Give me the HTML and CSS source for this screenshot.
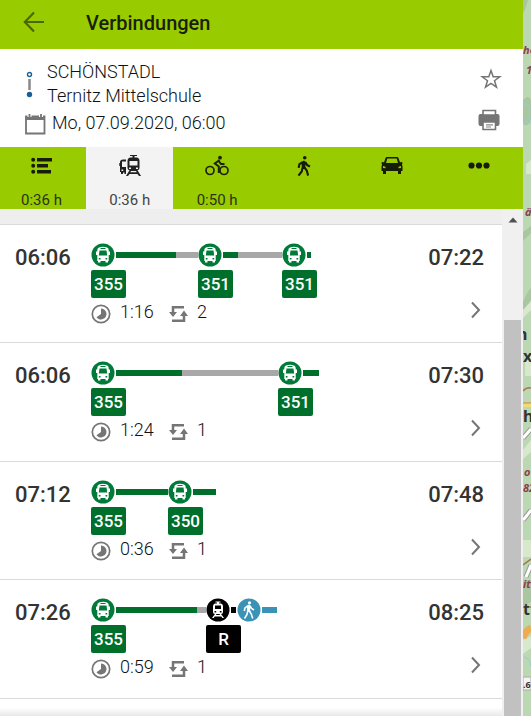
FILE: index.html
```html
<!DOCTYPE html>
<html lang="de">
<head>
<meta charset="utf-8">
<meta name="viewport" content="width=device-width, initial-scale=1">
<title>Verbindungen</title>
<link rel="stylesheet" href="styles.css">
</head>
<body>
<svg class="sprite" aria-hidden="true">
  <symbol id="bus" viewBox="0 0 24 24">
    <circle cx="12" cy="12" r="11.5" fill="#007a38"/>
    <path fill="#fff" d="M8 4.500Q12 3 16 4.500Q17.700 5 17.700 7V8.500H19V12H17.700V18H17V19.500H14.500V18H9.500V19.500H7V18H6.300V12H5V8.500H6.300V7Q6.300 5 8 4.500Z"/>
    <path fill="#007a38" d="M9.500 5h5v1h-5zM8.500 7.500h7l.7 5H7.800zM7.800 15h1.700v1.500H7.800zM14.500 15h1.700v1.500h-1.700z"/>
  </symbol>
  <symbol id="train" viewBox="0 0 24 24">
    <circle cx="12" cy="12" r="11.500" fill="#000"/>
    <path fill="#fff" d="M9.500 3.500h5v1H13V5.500h2Q17 6 17 8v6q0 2-2 2H9q-2 0-2-2V8q0-2 2-2.500h2V4.500H9.500zM9 16h1.500l-.7 1h4.400l-.7-1H15l3 4h-1.700l-1-1.500H8.700l-1 1.500H6z"/>
    <path fill="#000" d="M9 7.500h6V11H9zM8.500 13h1.700v1.500H8.500zM13.800 13h1.700v1.500h-1.700z"/>
  </symbol>
  <symbol id="walkman" viewBox="0 0 24 24">
    <circle cx="12.800" cy="3" r="2" fill="currentColor"/>
    <path fill="none" stroke="currentColor" stroke-width="2.300" d="M10 8 7 10l-.8 4M13.500 8l2 3 3 1.500M10.500 13.500 9.500 18l-3.500 4.500M12 13l3 4 1.500 5.500"/>
    <path fill="currentColor" d="M9 7.500 12 6l2.500 2-1.200 4.500 1 2.500-4.500-.5z"/>
  </symbol>
  <symbol id="walk" viewBox="0 0 24 24">
    <circle cx="12" cy="12" r="11.500" fill="#3a93b7"/>
    <circle cx="12.500" cy="4.800" r="1.600" fill="#fff"/>
    <path fill="none" stroke="#fff" stroke-width="1.600" d="M10.500 8 8 10l-.7 3M13 8l1.500 2.500L17 12M10.800 12.500 10 16.500l-2.500 4M12 12.500l2.300 3.500 1.400 4.500"/>
    <path fill="#fff" d="M9.800 7.500 12 6.500l2 1.500-1 4 .8 2-3.600-.5z"/>
  </symbol>
  <symbol id="clock" viewBox="0 0 20 20">
    <circle cx="10" cy="10" r="8.700" fill="none" stroke="#757575" stroke-width="1.700"/>
    <path fill="#757575" d="M10 4.500A5.500 5.500 0 1 1 5.500 13.200L10 10z"/>
  </symbol>
  <symbol id="change" viewBox="0 0 20 18">
    <path fill="none" stroke="#757575" stroke-width="2.500" d="M16 2.300H5V8M4 15.800h12V10"/>
    <path fill="#757575" d="M1 7h8l-4 5zM12 11h8l-4-5.500z"/>
  </symbol>
  <symbol id="chevron" viewBox="0 0 10 18">
    <path fill="none" stroke="#757575" stroke-width="2" d="m1 1.500 7 7.500-7 7.500"/>
  </symbol>
</svg>

<main class="app">
  <section class="panel">
    <header class="topbar">
      <button class="icon-button" aria-label="Zurück">
        <svg width="22" height="22" viewBox="0 0 22 22" fill="none" stroke="#4c6600" stroke-width="2.200"><path d="M21 11H2M11 1.500 1.800 11l9.200 9.500"/></svg>
      </button>
      <h1>Verbindungen</h1>
    </header>

    <section class="query">
      <div class="query-text">
        <div class="route">
          <svg width="11" height="28" viewBox="0 0 11 28"><circle cx="5.500" cy="3.500" r="2" fill="#fff" stroke="#1b6197" stroke-width="1.400"/><path stroke="#888" stroke-width="2.500" d="M5.500 8v11"/><circle cx="5.500" cy="23.500" r="2.700" fill="#1b5e96"/></svg>
          <div><div>SCHÖNSTADL</div><div>Ternitz Mittelschule</div></div>
        </div>
        <div class="date">
          <svg width="22" height="22" viewBox="0 0 22 22"><path fill="none" stroke="#757575" stroke-width="1.800" d="M2 3.500h18.500v17H2z"/><path fill="#757575" d="M1.500 3h19v4h-19z"/><path stroke="#fff" stroke-width="4" d="M5.500 0v4M17 0v4"/><path stroke="#757575" stroke-width="1.800" d="M5.500 1v4M17 1v4"/></svg>
          <span>Mo, 07.09.2020, 06:00</span>
        </div>
      </div>
      <div class="query-actions">
        <button class="icon-button" aria-label="Merken"><svg width="22" height="22" viewBox="0 0 22 22"><path fill="none" stroke="#757575" stroke-width="1.500" d="m11 2.500 2.200 6.200 6.600.1-5.300 3.900 2 6.500L11 15.300l-5.500 3.900 2-6.500-5.300-3.900 6.600-.1z"/></svg></button>
        <button class="icon-button" aria-label="Drucken"><svg width="22" height="22" viewBox="0 0 22 22"><rect x="0.500" y="5" width="21" height="12" rx="2" fill="#757575"/><path fill="#fff" stroke="#757575" stroke-width="1.600" d="M5 1.500h12.500V6H5zM5 13h12.500v7.500H5z"/><path stroke="#888" stroke-width="1.200" d="M8 15.800h7M8 18h5"/></svg></button>
      </div>
    </section>

    <nav class="modes">
      <button aria-label="Alle"><svg width="22" height="22" viewBox="0 0 22 22" fill="#171c08"><path d="M6 3h15v3.500H6zM6 9h11v3.500H6zM6 15h14v3.500H6z"/><circle cx="2.200" cy="4.800" r="2"/><circle cx="2.200" cy="10.800" r="2"/><circle cx="2.200" cy="16.800" r="2"/></svg><span>0:36 h</span></button>
      <button class="active" aria-label="Öffentlicher Verkehr"><svg width="22" height="22" viewBox="0 0 22 22"><path fill="#202020" d="M7 4.500v2H3V12h4v7H5.500v-1.500H4V19H2v-2H1v-6H.3V8H1V6.500Q1.500 4.500 4 4.500zM11 0h7v1h-2.500v1.500H18Q20.500 3 20.500 6v7q0 2-2 2.300L22 21h-2l-1.500-2h-8L9 21H7l3.500-5.700q-2-.3-2-2.300V6q0-3 2.500-3.500h2.500V1H11z"/><path fill="#f2f2f2" d="M10.500 6h8v4.500h-8zM10 12.500h2V14h-2zM17 12.500h2V14h-2zM12 16h5l.7 1.200h-6.400zM2.500 14.500h1.700V16H2.500z"/></svg><span>0:36 h</span></button>
      <button aria-label="Fahrrad"><svg width="24" height="22" viewBox="0 0 24 22"><g fill="none" stroke="#1c2206" stroke-width="1.700"><circle cx="5" cy="15.500" r="4"/><circle cx="19" cy="15.500" r="4"/><path stroke-width="2" d="m14.500 5-4.700 3.500 4 3V18M13 5l3 4h3.500"/></g><circle cx="15" cy="2.700" r="1.900" fill="#1c2206"/></svg><span>0:50 h</span></button>
      <button aria-label="Zu Fuß"><svg class="dark" width="22" height="22"><use href="#walkman"/></svg></button>
      <button aria-label="Auto"><svg width="22" height="22" viewBox="0 0 22 22"><path fill="#171c08" d="M6 2h10q1 0 1.500 1L19 7.500 20 7q1.500-.2 1.500 1L21 9.500l.5 2V16H20v3h-3v-3H5v3H2v-3H.5v-4.500l.5-2L.5 8q0-1.200 1.500-1l1 .5L4.500 3Q5 2 6 2z"/><path fill="#9c0" d="M6.300 3.500h9.400L17 8H5zM2 11l2.500.7v1.500L2 13zM20 11l-2.500.7v1.500L20 13z"/></svg></button>
      <button aria-label="Weitere"><svg width="22" height="22" viewBox="0 0 22 22" fill="#171c08"><circle cx="3.500" cy="10.500" r="3.100"/><circle cx="11" cy="10.500" r="3.100"/><circle cx="18.500" cy="10.500" r="3.100"/></svg></button>
    </nav>

    <div class="results">
      <div class="results-scroll">
        <div class="list-head"></div>
        <article class="trip">
          <time>06:06</time>
          <div class="trip-body">
            <div class="legs">
              <div class="leg" style="width:107px"><div class="line"><svg><use href="#bus"/></svg><i style="width:60px"></i><i class="wait"></i></div><b>355</b></div>
              <div class="leg" style="width:84px"><div class="line"><svg><use href="#bus"/></svg><i style="width:15px"></i><i class="wait"></i></div><b>351</b></div>
              <div class="leg"><div class="line"><svg><use href="#bus"/></svg><i style="width:4px"></i></div><b>351</b></div>
            </div>
            <div class="facts"><svg width="20" height="20"><use href="#clock"/></svg><span class="duration">1:16</span><svg width="20" height="18"><use href="#change"/></svg><span>2</span></div>
          </div>
          <div class="arrival"><time>07:22</time><a href="#trip-1" aria-label="Details"><svg width="10" height="18"><use href="#chevron"/></svg></a></div>
        </article>
        <article class="trip">
          <time>06:06</time>
          <div class="trip-body">
            <div class="legs">
              <div class="leg" style="width:187px"><div class="line"><svg><use href="#bus"/></svg><i style="width:66px"></i><i class="wait"></i></div><b>355</b></div>
              <div class="leg"><div class="line"><svg><use href="#bus"/></svg><i style="width:16px"></i></div><b>351</b></div>
            </div>
            <div class="facts"><svg width="20" height="20"><use href="#clock"/></svg><span class="duration">1:24</span><svg width="20" height="18"><use href="#change"/></svg><span>1</span></div>
          </div>
          <div class="arrival"><time>07:30</time><a href="#trip-2" aria-label="Details"><svg width="10" height="18"><use href="#chevron"/></svg></a></div>
        </article>
        <article class="trip">
          <time>07:12</time>
          <div class="trip-body">
            <div class="legs">
              <div class="leg" style="width:77px"><div class="line"><svg><use href="#bus"/></svg><i style="width:52px"></i></div><b>355</b></div>
              <div class="leg"><div class="line"><svg><use href="#bus"/></svg><i style="width:23px"></i></div><b>350</b></div>
            </div>
            <div class="facts"><svg width="20" height="20"><use href="#clock"/></svg><span class="duration">0:36</span><svg width="20" height="18"><use href="#change"/></svg><span>1</span></div>
          </div>
          <div class="arrival"><time>07:48</time><a href="#trip-3" aria-label="Details"><svg width="10" height="18"><use href="#chevron"/></svg></a></div>
        </article>
        <article class="trip">
          <time>07:26</time>
          <div class="trip-body">
            <div class="legs">
              <div class="leg" style="width:115px"><div class="line"><svg><use href="#bus"/></svg><i style="width:81px"></i><i class="wait"></i></div><b>355</b></div>
              <div class="leg rail" style="width:31px"><div class="line"><svg><use href="#train"/></svg><i style="width:5px"></i></div><b>R</b></div>
              <div class="leg foot"><div class="line"><svg><use href="#walk"/></svg><i style="width:15px"></i></div></div>
            </div>
            <div class="facts"><svg width="20" height="20"><use href="#clock"/></svg><span class="duration">0:59</span><svg width="20" height="18"><use href="#change"/></svg><span>1</span></div>
          </div>
          <div class="arrival"><time>08:25</time><a href="#trip-4" aria-label="Details"><svg width="10" height="18"><use href="#chevron"/></svg></a></div>
        </article>
        <div class="fade"></div>
      </div>
      <div class="scrollbar" aria-hidden="true">
        <svg width="10" height="6" viewBox="0 0 10 6"><path fill="#505050" d="M5 .5 9.500 5.500h-9z"/></svg>
        <div class="thumb"></div>
      </div>
    </div>
  </section>

  <aside class="map" aria-label="Karte">
    <svg width="8" height="716" viewBox="0 0 8 716">
      <rect width="8" height="716" fill="#bcd8b2"/>
      <g fill="#a9c69f"><path d="M0 0h5L2 10 0 13zM0 100q5-6 8 0v20q-3 8-8 4zM0 232l8-6v7l-8 8zM0 302q5-12 8-14v12q-4 8-8 10zM0 580h8v22l-8 4z"/></g>
      <g fill="#d8e8cd"><path d="M3 164l5-4v14H3zM0 310l8-9v9l-8 8zM2 356h6v20H2zM0 450l8-10v12l-8 7zM0 540h8v17H0zM0 640l8-4v12l-8 6z"/></g>
      <path d="M0 105q7-2 7 7t-7 11M4 123h4M1 657q5 0 7 9" fill="none" stroke="#8fd0dc"/>
      <path d="M0 391q3-4 8-3M0 565l8-6" fill="none" stroke="#a77549" stroke-width="1.500"/>
      <path d="M0 405h8" stroke="#f0dc72" stroke-width="4"/><path d="M0 403h8" stroke="#d8823c"/>
      <path d="M0 438l8-9M0 520q3-3 8-10M3 577l5-12" fill="none" stroke="#999" stroke-width="5"/>
      <path d="M0 438l8-9M0 520q3-3 8-10M3 577l5-12" fill="none" stroke="#fff" stroke-width="3"/>
      <path d="M0 638q3-8 8-10" fill="none" stroke="#efab4f" stroke-width="7"/>
      <rect y="677" width="8" height="13" fill="#f4f4f4" stroke="#aaa"/>
      <g class="place"><text x="0" y="54">he</text><text x="3" y="74">1</text><text x="2" y="216">ä</text><text x="1" y="476">o</text><text x="0" y="492">82</text><text x="0" y="588">it</text></g>
      <g class="town"><text x="-6" y="340">n</text><text x="0" y="362">x</text><text x="0" y="422">h</text><text x="0" y="615">tt</text></g>
      <text class="height" x="0" y="688">.6</text>
    </svg>
  </aside>
</main>
</body>
</html>
```
FILE: styles.css
```css
* { box-sizing: border-box; }
body { margin: 0; font-family: Roboto, "Liberation Sans", sans-serif; color: #333; }
button { padding: 0; border: 0; background: none; font: inherit; color: inherit; }
svg { display: block; flex: none; }
.sprite { display: none; }
.app { display: flex; height: 100vh; overflow: hidden; }
.panel { flex: 1; min-width: 0; display: flex; flex-direction: column; }
.map { flex: none; width: 8px; overflow: hidden; background: #bcd8b2; }

.topbar { display: flex; align-items: center; gap: 41px; padding: 0 23px 6px; height: 49px; background: #9c0; }
h1 { margin: 0; padding-top: 2px; font-size: 20px; line-height: 24px; font-weight: 500; color: #1a1f08; }

.query { display: flex; justify-content: space-between; padding: 11px 21px 0 24px; height: 98px; font-size: 18px; line-height: 24px; font-weight: 300; color: #111; }
.route { display: flex; gap: 12px; }
.route svg { margin-top: 11px; }
.date { display: flex; gap: 6px; padding-top: 3px; }
.date svg { margin-top: 2px; }
.query-actions { display: flex; flex-direction: column; gap: 19px; padding-top: 8px; }
.query-actions .icon-button:last-child { margin-left: -2px; }

.modes { display: grid; grid-template-columns: 86px repeat(5, 1fr); height: 62px; background: #9c0; }
.modes button { display: flex; flex-direction: column; align-items: center; gap: 13px; padding: 8px 3px 0 0; font-size: 15px; line-height: 20px; }
.modes .active { background: #f3f3f3; padding-right: 0; }
.modes .active ~ button { padding-right: 0; }
.modes span { color: #2a3210; }
.modes .active span { color: #444; }
.dark { color: #171c08; }

.results { flex: 1; min-height: 0; display: flex; }
.results-scroll { flex: 1; min-width: 0; display: flex; flex-direction: column; overflow: hidden; }
.list-head { flex: none; height: 16px; background: #eee; border-bottom: 1px solid #dadada; }
.trip { flex: none; display: flex; height: 118px; padding: 18px 18px 0 15px; border-bottom: 1px solid #dadada; }
.trip:nth-of-type(even) { height: 119px; }
time { padding-top: 1px; font-size: 22px; line-height: 28px; font-weight: 500; width: 76px; }
.trip-body { flex: 1; min-width: 0; }
.legs { display: flex; height: 56px; color: #006f2c; }
.leg { flex: none; }
.rail { color: #000; }
.foot { color: #3a93b7; }
.line { display: flex; align-items: center; height: 24px; }
.line svg { width: 24px; height: 24px; margin-right: 1px; }
.line i { height: 6px; background: currentColor; }
.line .wait { flex: 1; background: #a8a8a8; }
.leg b { display: block; width: 35px; margin-top: 3px; border-radius: 2px; background: currentColor; font-size: 17px; line-height: 28px; font-weight: 500; text-align: center; -webkit-text-fill-color: #fff; }
.facts { display: flex; align-items: center; height: 26px; font-size: 18px; line-height: 24px; font-weight: 300; color: #111; }
.facts svg { margin-top: 4px; }
.duration { width: 48px; margin-left: 9px; }
.facts span:last-child { margin-left: 9px; }
.arrival { display: flex; flex-direction: column; align-items: flex-end; gap: 29px; }
.arrival time { width: auto; }
.arrival a { margin-right: 3px; }
.fade { flex: 1; background: linear-gradient(#fff 50%, #e8e8e8); }

.scrollbar { flex: none; width: 21px; display: flex; flex-direction: column; align-items: center; gap: 97px; padding-top: 8px; background: #f0f0f0; }
.thumb { flex: 1; width: 17px; background: #c1c1c1; }

.place { font: italic bold 11px "Noto Sans", sans-serif; fill: #8c4050; }
.town { font: bold 16px "Noto Sans", sans-serif; fill: #333; }
.height { font: bold 9px "Noto Sans", sans-serif; fill: #333; }
```
